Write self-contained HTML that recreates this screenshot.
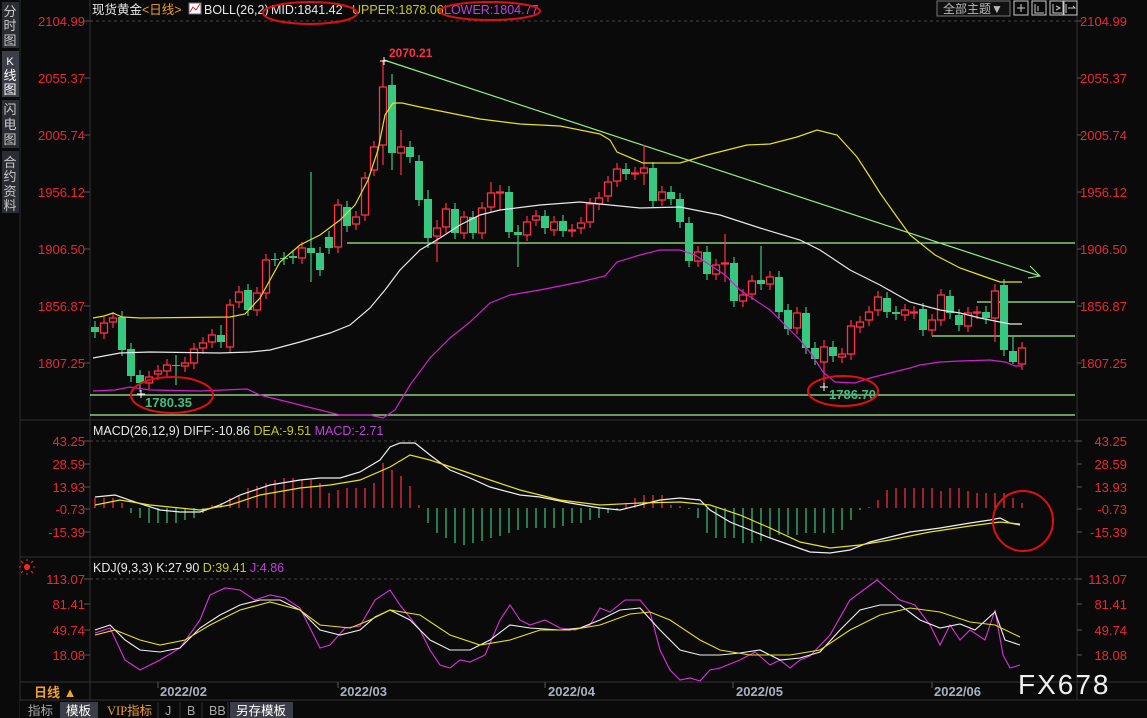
<!DOCTYPE html>
<html><head><meta charset="utf-8">
<style>
html,body{margin:0;padding:0;background:#0a0a0a;width:1147px;height:718px;overflow:hidden}
svg{display:block;font-family:"Liberation Sans","Noto Sans CJK SC",sans-serif}
</style></head><body>
<svg id="s" width="1147" height="718" viewBox="0 0 1147 718" xmlns="http://www.w3.org/2000/svg">
<rect width="1147" height="718" fill="#0a0a0a"/>
<rect x="0" y="0" width="19" height="718" fill="#0a0a0a"/>
<rect x="2" y="2" width="17" height="46" fill="#2a2d33"/>
<rect x="2" y="51" width="17" height="46" fill="#3b3e46"/>
<rect x="2" y="100" width="17" height="48" fill="#2a2d33"/>
<rect x="2" y="151" width="17" height="62" fill="#2a2d33"/>
<g fill="#c8c8c8" font-size="13" text-anchor="middle">
<text x="10" y="16">分</text><text x="10" y="30">时</text><text x="10" y="45">图</text>
<text x="10" y="65" fill="#fff" font-size="11">K</text><text x="10" y="80" fill="#fff">线</text><text x="10" y="94" fill="#fff">图</text>
<text x="10" y="114">闪</text><text x="10" y="129">电</text><text x="10" y="144">图</text>
<text x="10" y="167">合</text><text x="10" y="181">约</text><text x="10" y="196">资</text><text x="10" y="210">料</text>
</g>
<line x1="20" y1="0" x2="20" y2="718" stroke="#2c2c2c"/>
<line x1="90" y1="0" x2="90" y2="700" stroke="#333"/>
<line x1="1077" y1="0" x2="1077" y2="700" stroke="#333"/>
<line x1="20" y1="420" x2="1147" y2="420" stroke="#333"/>
<line x1="20" y1="557" x2="1147" y2="557" stroke="#333"/>
<line x1="20" y1="682" x2="1147" y2="682" stroke="#333"/>
<line x1="20" y1="700" x2="1147" y2="700" stroke="#333"/>
<g stroke="#444" stroke-dasharray="3,3">
<line x1="90" y1="21" x2="1077" y2="21"/>
<line x1="90" y1="441" x2="1077" y2="441"/>
<line x1="90" y1="579" x2="1077" y2="579"/>
</g>
<text x="92" y="14" font-size="12.5" fill="#e8e8e8">现货黄金</text>
<text x="142" y="14" font-size="12.5" fill="#f0a030">&lt;日线&gt;</text>
<rect x="189" y="3" width="12" height="11" fill="#fff" stroke="#668" />
<polyline points="190,12 193,7 196,10 200,4" fill="none" stroke="#d22" stroke-width="1"/>
<text x="204" y="14" font-size="12.5" fill="#e8e8e8">BOLL(26,2)</text>
<text x="271" y="14" font-size="12.5" fill="#e8e8e8">MID:1841.42</text>
<text x="352" y="14" font-size="12.5" fill="#c8c820">UPPER:1878.06</text>
<text x="444" y="14" font-size="12.5" fill="#c040e0">LOWER:1804.77</text>
<ellipse cx="310" cy="13" rx="47" ry="11" fill="none" stroke="#e01010" stroke-width="2"/>
<ellipse cx="490" cy="11" rx="50" ry="9" fill="none" stroke="#e01010" stroke-width="2"/>
<rect x="937" y="1" width="73" height="15" fill="#111" stroke="#777"/>
<text x="943" y="13" font-size="12" fill="#bbb">全部主题▼</text>
<g fill="none" stroke="#ccc">
<rect x="1014" y="1" width="14" height="14"/><rect x="1032" y="1" width="14" height="14"/>
<rect x="1050" y="1" width="14" height="14"/><rect x="1063" y="1" width="14" height="14"/>
<path d="M1021 4v8M1017 8h8M1035 4v9h9M1038 6v5M1053 4v9h9M1056 6l4 2-4 2M1066 4v9M1068 8h7l-2-2"/>
</g>
<g font-size="13" fill="#e8283a" text-anchor="end" id="ax"></g>
<g stroke="#a8f090" stroke-width="1.2">
<line x1="347" y1="243" x2="1075" y2="243"/>
<line x1="977" y1="302" x2="1075" y2="302"/>
<line x1="932" y1="336" x2="1075" y2="336"/>
<line x1="90" y1="395" x2="1075" y2="395"/>
<line x1="90" y1="415" x2="1075" y2="415"/>
</g>
<line x1="384" y1="60" x2="1040" y2="276" stroke="#90f080" stroke-width="1.2"/>
<path d="M1030 266 L1040 276 L1028 278" fill="none" stroke="#90f080"/>
<g id="candles"></g>
<polyline fill="none" stroke="#e8e020" stroke-width="1.2" points="93,318 104,316 113,313 122,317 140,318 230,317 245,314 260,298 280,262 300,245 320,235 340,220 355,205 368,180 378,150 385,115 393,103 402,103 420,107 450,113 480,119 520,124 560,126 600,134 610,140 617,152 643,163 680,163 707,155 747,145 770,144 797,137 817,130 837,135 857,157 870,177 880,193 897,217 910,235 935,255 960,268 980,275 1000,282 1022,282"/>
<polyline fill="none" stroke="#e8e8e8" stroke-width="1.2" points="93,358 120,353 150,352 220,353 250,352 270,350 300,342 330,333 350,325 370,308 385,290 400,270 420,250 440,238 460,225 480,215 500,210 540,205 580,202 610,205 640,208 680,207 720,215 760,228 800,240 820,250 850,270 880,285 910,302 940,310 960,313 980,318 1000,322 1010,324 1022,324"/>
<polyline fill="none" stroke="#d020d0" stroke-width="1.2" points="93,391 115,390 130,387 150,390 200,391 247,389 260,395 280,400 300,405 340,415 370,415 383,418 395,410 410,385 430,358 450,338 470,322 490,303 510,295 540,290 580,282 605,276 617,262 640,255 660,250 680,250 695,255 710,265 725,275 740,290 755,300 770,310 780,320 790,330 800,340 812,355 823,372 835,382 855,383 870,378 890,373 910,368 920,365 940,362 960,361 990,360 1005,362 1015,366 1022,366"/>
<text x="389" y="57" font-size="12" font-weight="bold" fill="#ff3040">2070.21</text>
<path d="M380 61h8M384 57v8" stroke="#fff"/>
<text x="145" y="407" font-size="13" font-weight="bold" fill="#40c080">1780.35</text>
<path d="M137 394h8M141 390v8" stroke="#fff"/>
<text x="829" y="399" font-size="13" font-weight="bold" fill="#40c080">1786.70</text>
<path d="M820 387h8M824 383v8" stroke="#fff"/>
<ellipse cx="172" cy="395" rx="41" ry="18" fill="none" stroke="#e01010" stroke-width="2"/>
<ellipse cx="843" cy="391" rx="35" ry="15" fill="none" stroke="#e01010" stroke-width="2"/>
<text x="93" y="435" font-size="12.5" fill="#e8e8e8">MACD(26,12,9) DIFF:-10.86 <tspan fill="#c8c820">DEA:-9.51</tspan> <tspan fill="#c040e0">MACD:-2.71</tspan></text>
<g id="hist"></g>
<polyline fill="none" stroke="#f0f0f0" stroke-width="1.2" points="95,497 115,495 135,502 160,510 180,512 200,512 220,505 240,495 270,485 300,480 320,478 340,478 360,472 380,460 390,447 400,443 415,443 430,455 450,470 470,478 490,487 520,495 540,497 570,503 600,508 620,510 640,505 660,500 680,498 700,500 710,510 730,522 750,530 770,538 790,545 810,552 830,553 850,550 870,542 890,537 910,532 940,528 970,523 990,520 1000,518 1010,523 1020,525"/>
<polyline fill="none" stroke="#e8e020" stroke-width="1.2" points="95,505 120,500 150,505 180,508 200,510 230,505 260,495 300,488 330,485 360,480 390,467 410,455 430,460 460,470 490,480 520,490 560,500 600,505 640,503 680,502 710,505 740,515 770,528 800,542 830,548 860,545 890,540 930,532 970,526 1000,522 1020,524"/>
<circle cx="1023" cy="521" r="30" fill="none" stroke="#e01010" stroke-width="2"/>
<g transform="translate(27,567)"><circle r="3" fill="#f22"/><path d="M-6 0h-2M6 0h2M0-6v-2M0 6v2M-4-4l-2-2M4 4l2 2M4-4l2-2M-4 4l-2 2" stroke="#f22"/></g>
<text x="93" y="572" font-size="12.5" fill="#e8e8e8">KDJ(9,3,3) K:27.90 <tspan fill="#c8c820">D:39.41</tspan> <tspan fill="#c040e0">J:4.86</tspan></text>
<polyline fill="none" stroke="#e030e0" stroke-width="1.1" points="95,633 110,628 125,660 140,670 160,660 180,648 200,620 210,595 225,588 240,590 255,600 270,595 285,598 300,608 320,648 330,645 345,628 360,626 375,600 390,590 400,605 420,630 430,650 440,665 450,668 460,660 470,662 485,655 500,620 510,605 520,620 530,625 545,620 560,628 575,630 590,625 600,608 610,612 625,600 640,600 650,612 660,650 670,670 680,680 690,678 700,681 710,670 720,668 740,660 755,652 770,665 780,660 790,668 800,660 810,656 830,635 850,600 877,580 900,600 915,605 930,625 940,645 950,625 960,640 970,630 985,640 995,610 1003,655 1010,668 1020,665"/>
<polyline fill="none" stroke="#f0f0f0" stroke-width="1.1" points="95,630 110,625 125,640 140,650 160,652 180,648 200,628 220,615 240,605 260,600 280,600 300,610 320,630 340,635 360,630 375,617 390,610 410,620 430,640 450,650 470,650 490,640 510,625 530,628 560,630 580,628 600,620 620,610 640,608 660,630 680,650 700,655 720,655 740,653 760,650 780,660 800,658 820,652 840,630 860,610 880,605 900,605 920,620 940,628 960,624 975,630 995,612 1005,640 1020,645"/>
<polyline fill="none" stroke="#e8e020" stroke-width="1.1" points="95,635 115,630 140,640 160,645 185,640 210,625 240,610 270,602 300,610 320,625 350,628 370,620 390,610 420,615 450,635 480,645 510,640 540,630 570,630 600,625 630,614 650,612 670,620 700,640 720,650 750,655 790,655 820,650 850,630 880,615 910,608 940,612 970,622 995,625 1020,637"/>
<g font-size="13" fill="#a8b0c0" font-weight="bold">
<text x="160" y="696">2022/02</text><text x="340" y="696">2022/03</text><text x="548" y="696">2022/04</text><text x="736" y="696">2022/05</text><text x="934" y="696">2022/06</text>
</g>
<g stroke="#555"><line x1="158" y1="682" x2="158" y2="688"/><line x1="338" y1="682" x2="338" y2="688"/><line x1="545" y1="682" x2="545" y2="688"/><line x1="733" y1="682" x2="733" y2="688"/><line x1="932" y1="682" x2="932" y2="688"/></g>
<text x="34" y="697" font-size="13" font-weight="bold" fill="#f0a030">日线 ▲</text>
<text x="1018" y="694" font-size="28" fill="#f0f0f0" letter-spacing="2">FX678</text>
<rect x="20" y="701" width="1127" height="17" fill="#0a0a0a"/>
<rect x="60" y="702" width="38" height="16" fill="#3b3e46"/>
<rect x="230" y="702" width="63" height="16" fill="#3b3e46"/>
<g font-size="12.5">
<text x="28" y="715" fill="#aaa">指标</text>
<text x="66" y="715" fill="#fff">模板</text>
<text x="107" y="715" fill="#f0a030" font-family="Liberation Serif, Noto Sans CJK SC, serif">VIP指标</text>
<text x="165" y="715" fill="#aaa">J</text>
<text x="187" y="715" fill="#aaa">B</text>
<text x="209" y="715" fill="#aaa">BB</text>
<text x="236" y="715" fill="#fff">另存模板</text>
</g>
<g stroke="#333"><line x1="158" y1="702" x2="158" y2="718"/><line x1="180" y1="702" x2="180" y2="718"/><line x1="202" y1="702" x2="202" y2="718"/><line x1="228" y1="702" x2="228" y2="718"/></g>
</svg>
<script>
var NS="http://www.w3.org/2000/svg";
function el(p,t,a,txt){var e=document.createElementNS(NS,t);for(var k in a)e.setAttribute(k,a[k]);if(txt)e.textContent=txt;p.appendChild(e);return e;}
var ax=document.getElementById('ax');
[["2104.99",21],["2055.37",78],["2005.74",135],["1956.12",192],["1906.50",249],["1856.87",306],["1807.25",363],["43.25",441],["28.59",464],["13.93",487],["-0.73",509],["-15.39",532],["113.07",579],["81.41",604],["49.74",630],["18.08",655]].forEach(function(a){
 el(ax,'text',{x:85,y:a[1]+5},a[0]);
 el(ax,'text',{x:1127,y:a[1]+5},a[0]);
 el(document.getElementById('s'),'line',{x1:84,y1:a[1],x2:90,y2:a[1],stroke:'#555'});
 el(document.getElementById('s'),'line',{x1:1077,y1:a[1],x2:1082,y2:a[1],stroke:'#555'});
});
var C=[[95,327,332,'g'],[104,323,333,'r'],[113,318,322,'r'],[122,317,350,'g'],[131,349,376,'g'],[140,375,383,'g',370,392],[149,377,383,'r'],[158,371,374,'r'],[167,365,371,'r'],[176,365,366,'g',355,385],[185,363,366,'r'],[194,349,363,'r'],[203,343,348,'r'],[212,335,342,'r'],[221,335,342,'g',325,348],[230,305,347,'r'],[239,292,302,'r'],[248,290,310,'g'],[257,293,310,'r'],[266,260,293,'r'],[275,259,260,'g'],[284,258,259,'g'],[293,256,258,'g'],[302,248,258,'r'],[311,248,253,'g',172,282],[320,253,270,'g'],[329,237,248,'g'],[338,205,247,'r'],[347,207,226,'g'],[356,217,224,'r'],[365,178,215,'r'],[374,147,170,'r'],[383,87,145,'r',60,165],[392,85,153,'g',74,170],[401,147,153,'r',130,175],[410,147,157,'g'],[419,161,200,'g'],[428,199,238,'g',190,248],[437,228,236,'r',220,262],[446,209,227,'r'],[455,209,233,'g'],[464,217,233,'r'],[473,217,233,'g'],[482,208,233,'r'],[491,193,207,'r',182,212],[500,192,193,'r',185,210],[509,192,232,'g'],[518,232,235,'g',225,267],[527,222,235,'r'],[536,216,220,'r'],[545,216,228,'g'],[554,222,230,'r'],[563,221,231,'g'],[572,230,231,'r'],[581,223,228,'r'],[590,204,222,'r'],[599,198,204,'r'],[608,182,196,'r'],[617,169,181,'r'],[626,169,174,'g'],[635,173,174,'r'],[644,168,173,'r',145,185],[653,168,201,'g'],[662,192,200,'r'],[671,192,199,'g'],[680,199,222,'g'],[689,223,261,'g'],[698,252,261,'r'],[707,252,274,'g'],[716,265,274,'r'],[725,263,264,'r',234,282],[734,263,301,'g'],[743,295,301,'r'],[752,281,294,'r'],[761,280,284,'g',246,290],[770,277,284,'r'],[779,277,312,'g'],[788,310,329,'g'],[797,313,328,'r'],[806,313,348,'g'],[815,348,359,'g'],[824,347,362,'r',340,387],[833,347,356,'g'],[842,354,357,'r'],[851,326,354,'r'],[860,322,327,'r'],[869,312,320,'r'],[878,297,310,'r'],[887,298,312,'g'],[896,312,314,'g'],[905,310,315,'r'],[914,312,313,'r'],[923,309,330,'g'],[932,320,330,'r'],[941,295,320,'r'],[950,296,313,'g'],[959,315,325,'g'],[968,313,326,'r'],[977,312,313,'r'],[986,312,318,'g'],[995,291,318,'r',284,342],[1004,285,350,'g'],[1013,351,362,'g',336,364],[1022,348,364,'r']];
var cg=document.getElementById('candles');
C.forEach(function(c){var x=c[0],t=c[1],b=c[2],col=c[3]=='r'?'#ff3048':'#36c880';var wt=c[4]||t-6,wb=c[5]||b+6;
 el(cg,'line',{x1:x,y1:wt,x2:x,y2:wb,stroke:col,'stroke-width':1.2});
 var h=Math.max(1,b-t);
 if(c[3]=='r')el(cg,'rect',{x:x-3.5,y:t,width:7,height:h,fill:'#0a0a0a',stroke:col,'stroke-width':1.3});
 else el(cg,'rect',{x:x-4,y:t,width:8,height:h,fill:col});
});
var H=[10,10,10,5,-5,-10,-15,-15,-15,-15,-12,-10,-5,3,5,10,12,20,22,25,28,30,30,28,28,25,15,18,20,20,20,25,45,38,32,22,3,-15,-25,-30,-35,-37,-35,-33,-30,-28,-25,-22,-20,-20,-20,-20,-18,-15,-15,-12,-10,-5,-2,5,10,13,13,13,3,2,-1,-10,-25,-30,-30,-30,-35,-35,-33,-30,-27,-27,-27,-25,-25,-25,-25,-22,-12,-2,1,8,18,20,20,20,20,20,17,20,20,17,15,15,15,15,10,5,-4,-5];
var hg=document.getElementById('hist');
H.forEach(function(v,i){var x=95+9*i;if(x>1025)return;if(v==0)return;
 el(hg,'line',{x1:x,y1:508,x2:x,y2:508-v,stroke:v>0?'#ff3048':'#36c880','stroke-width':1.2});});
</script>
</body></html>
